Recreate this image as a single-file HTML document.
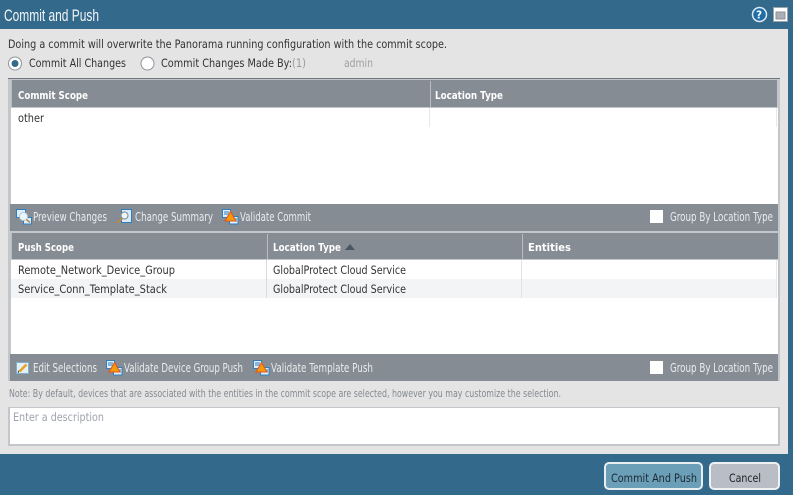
<!DOCTYPE html>
<html><head><meta charset="utf-8"><title>Commit and Push</title>
<style>
html,body{margin:0;padding:0;width:793px;height:495px;overflow:hidden;background:#33698a}
svg{display:block;position:absolute;left:0;top:0}
text{font-family:"DejaVu Sans","Liberation Sans",sans-serif;font-size:11.5px;fill:#333}
.h{fill:#fff;font-weight:bold;font-size:11px}
.t{fill:#e8ecef;font-size:12.5px}
</style></head><body>
<svg width="793" height="495" viewBox="0 0 793 495" xmlns="http://www.w3.org/2000/svg">
<defs>
<g id="val">
<rect x="0.5" y="0.5" width="8" height="8" fill="#dfeefa" stroke="#2f7fc0"/>
<path d="M2 3h5M2 5h5" stroke="#2f7fc0"/>
<rect x="7.5" y="7.5" width="8.500" height="7.500" fill="#dfeefa" stroke="#2f7fc0"/>
<path d="M9 12h6M9 10h6" stroke="#2f7fc0"/>
<path d="M8.500 2.500L14 12H3z" fill="#f59a0c" stroke="#e5541a"/>
</g>
</defs>
<rect width="793" height="495" fill="#33698a"/>
<rect x="0" y="29" width="788" height="425" fill="#e4e4e4"/>
<text x="4" y="21" style="font-family:'Liberation Sans',sans-serif;font-size:16.500px;fill:#f2f6f8" textLength="95" lengthAdjust="spacingAndGlyphs">Commit and Push</text>
<!-- help -->
<circle cx="759.500" cy="14.500" r="7" fill="#1f6da8" stroke="#dceaf3" stroke-width="1.500"/>
<text x="756" y="18.500" style="font-size:10.500px;font-weight:bold;fill:#fff">?</text>
<rect x="773.500" y="7.500" width="14" height="14" fill="#fff" stroke="#9aa3aa"/>
<rect x="776" y="12" width="9" height="7" fill="#a9afb5" stroke="#8a9197"/>

<text x="8" y="48" textLength="439" lengthAdjust="spacingAndGlyphs">Doing a commit will overwrite the Panorama running configuration with the commit scope.</text>
<circle cx="15" cy="63.500" r="6.500" fill="#fff" stroke="#8f959c"/>
<circle cx="15" cy="63.500" r="3.500" fill="#33698a"/>
<text x="29" y="67" textLength="97" lengthAdjust="spacingAndGlyphs">Commit All Changes</text>
<circle cx="147.500" cy="63.500" r="6.500" fill="#fff" stroke="#8f959c"/>
<text x="161" y="67" textLength="131" lengthAdjust="spacingAndGlyphs">Commit Changes Made By:</text>
<text x="292" y="67" style="fill:#999" textLength="14" lengthAdjust="spacingAndGlyphs">(1)</text>
<text x="344" y="67" style="fill:#a0a0a0" textLength="29" lengthAdjust="spacingAndGlyphs">admin</text>

<!-- grid 1 -->
<rect x="8" y="78" width="772" height="303" fill="#c3c6ca"/>
<rect x="8" y="78" width="772" height="1" fill="#70767e"/>
<rect x="11" y="80" width="766" height="27" fill="#868c93"/>
<rect x="11" y="80" width="1" height="27" fill="#b9bdc2"/>
<rect x="11" y="108" width="767" height="96" fill="#fff"/>
<rect x="430" y="81" width="1" height="26" fill="#b9bdc2"/>
<rect x="429" y="108" width="1" height="19" fill="#e6e8ea"/>
<rect x="776" y="108" width="1" height="19" fill="#e6e8ea"/>
<text class="h" x="18" y="99" textLength="70" lengthAdjust="spacingAndGlyphs">Commit Scope</text>
<text class="h" x="435" y="99" textLength="68" lengthAdjust="spacingAndGlyphs">Location Type</text>
<text x="18" y="122" textLength="26" lengthAdjust="spacingAndGlyphs">other</text>

<!-- toolbar 1 -->
<rect x="10" y="204" width="768" height="27" fill="#868c93"/>
<g transform="translate(16,209)">
<rect x="0.500" y="0.500" width="9" height="8" fill="#dfeefa" stroke="#2f7fc0"/>
<rect x="7.500" y="8.500" width="8" height="6.500" fill="#dfeefa" stroke="#2f7fc0"/>
<circle cx="7.500" cy="7.500" r="4" fill="#e9f6fb" stroke="#b8c8d0"/>
<path d="M10.500 10.500L14 13.500" stroke="#c08a3a" stroke-width="1.500"/>
</g>
<text class="t" x="33" y="221" textLength="74" lengthAdjust="spacingAndGlyphs">Preview Changes</text>
<g transform="translate(117,209)">
<rect x="4.500" y="0.500" width="10" height="13" fill="#dbeaf6" stroke="#2f7fc0"/>
<circle cx="7.500" cy="6.500" r="3.500" fill="#eef5f9" stroke="#7d8a92"/>
<path d="M5 9.500L0.500 14" stroke="#c08a3a" stroke-width="1.700"/>
</g>
<text class="t" x="135" y="221" textLength="78" lengthAdjust="spacingAndGlyphs">Change Summary</text>
<use href="#val" x="222" y="209"/>
<text class="t" x="240" y="221" textLength="71" lengthAdjust="spacingAndGlyphs">Validate Commit</text>
<rect x="650" y="210" width="13" height="13" fill="#fff"/>
<text class="t" x="670" y="221" textLength="103" lengthAdjust="spacingAndGlyphs">Group By Location Type</text>

<!-- grid 2 -->
<rect x="11" y="233" width="767" height="26" fill="#868c93"/>
<rect x="11" y="233" width="1" height="26" fill="#b9bdc2"/>
<rect x="11" y="260" width="767" height="94" fill="#fff"/>
<rect x="11" y="279" width="765" height="19" fill="#f3f4f5"/>
<rect x="267" y="234" width="1" height="25" fill="#b9bdc2"/>
<rect x="522" y="234" width="1" height="25" fill="#b9bdc2"/>
<rect x="266" y="260" width="1" height="38" fill="#d8dadd"/>
<rect x="521" y="260" width="1" height="38" fill="#e0e2e4"/>
<rect x="776" y="260" width="1" height="38" fill="#e6e8ea"/>
<text class="h" x="18" y="251" textLength="56" lengthAdjust="spacingAndGlyphs">Push Scope</text>
<text class="h" x="273" y="251" textLength="68" lengthAdjust="spacingAndGlyphs">Location Type</text>
<path d="M345 250L350 244L355 250z" fill="#4a5560"/>
<text class="h" x="528" y="251" textLength="43" lengthAdjust="spacingAndGlyphs">Entities</text>
<text x="18" y="274" textLength="157" lengthAdjust="spacingAndGlyphs">Remote_Network_Device_Group</text>
<text x="273" y="274" textLength="133" lengthAdjust="spacingAndGlyphs">GlobalProtect Cloud Service</text>
<text x="18" y="293" textLength="149" lengthAdjust="spacingAndGlyphs">Service_Conn_Template_Stack</text>
<text x="273" y="293" textLength="133" lengthAdjust="spacingAndGlyphs">GlobalProtect Cloud Service</text>

<!-- toolbar 2 -->
<rect x="10" y="354" width="768" height="27" fill="#868c93"/>
<rect x="8" y="381" width="772" height="2" fill="#e4e4e4"/>
<g transform="translate(16,362)">
<rect x="0.500" y="0.500" width="12" height="11" fill="#e4f0f8" stroke="#7fb0d0"/>
<path d="M3.500 9.500L10.500 2.500" stroke="#e8a420" stroke-width="2.500"/>
<path d="M2 11L3 8.500" stroke="#444" stroke-width="1"/>
</g>
<text class="t" x="33" y="372" textLength="64" lengthAdjust="spacingAndGlyphs">Edit Selections</text>
<use href="#val" x="106" y="360"/>
<text class="t" x="124" y="372" textLength="119" lengthAdjust="spacingAndGlyphs">Validate Device Group Push</text>
<use href="#val" x="253" y="360"/>
<text class="t" x="271" y="372" textLength="102" lengthAdjust="spacingAndGlyphs">Validate Template Push</text>
<rect x="650" y="361" width="13" height="13" fill="#fff"/>
<text class="t" x="670" y="372" textLength="103" lengthAdjust="spacingAndGlyphs">Group By Location Type</text>

<text x="9" y="397" style="font-size:10.500px;fill:#858a90" textLength="552" lengthAdjust="spacingAndGlyphs">Note: By default, devices that are associated with the entities in the commit scope are selected, however you may customize the selection.</text>
<rect x="8" y="407" width="772" height="39" fill="#c3c6ca"/>
<rect x="10" y="408" width="768" height="36" fill="#fff"/>
<text x="13" y="421" style="fill:#9ea4ad" textLength="91" lengthAdjust="spacingAndGlyphs">Enter a description</text>

<!-- buttons -->
<rect x="605" y="463" width="97" height="26" rx="4" fill="#6b9fb8" stroke="#e9eef1" stroke-width="2"/>
<text x="611" y="482" style="fill:#1d2a33" textLength="86" lengthAdjust="spacingAndGlyphs">Commit And Push</text>
<rect x="710" y="463" width="69" height="26" rx="4" fill="#b9bdc5" stroke="#eef0f2" stroke-width="2"/>
<text x="729" y="482" style="fill:#1d2025" textLength="32" lengthAdjust="spacingAndGlyphs">Cancel</text>
</svg>
</body></html>
